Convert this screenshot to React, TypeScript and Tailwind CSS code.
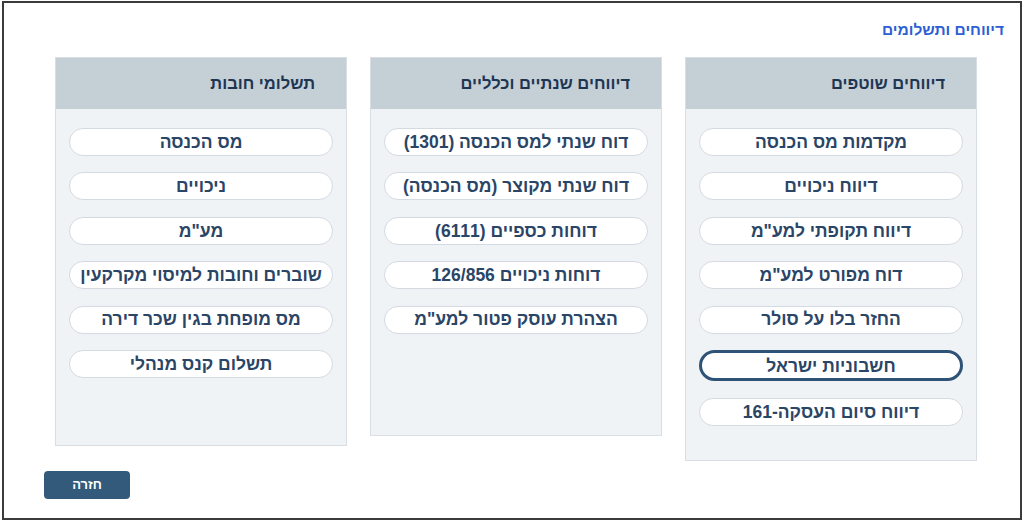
import React from "react";

type Column = {
  title: string;
  items: string[];
  height: string;
  selected?: number;
};

const columns: Column[] = [
  {
    title: "דיווחים שוטפים",
    height: "h-[404px]",
    selected: 5,
    items: [
      "מקדמות מס הכנסה",
      "דיווח ניכויים",
      "דיווח תקופתי למע\"מ",
      "דוח מפורט למע\"מ",
      "החזר בלו על סולר",
      "חשבוניות ישראל",
      "דיווח סיום העסקה-161",
    ],
  },
  {
    title: "דיווחים שנתיים וכלליים",
    height: "h-[379px]",
    items: [
      "דוח שנתי למס הכנסה (1301)",
      "דוח שנתי מקוצר (מס הכנסה)",
      "דוחות כספיים (6111)",
      "דוחות ניכויים 126/856",
      "הצהרת עוסק פטור למע\"מ",
    ],
  },
  {
    title: "תשלומי חובות",
    height: "h-[389px]",
    items: [
      "מס הכנסה",
      "ניכויים",
      "מע\"מ",
      "שוברים וחובות למיסוי מקרקעין",
      "מס מופחת בגין שכר דירה",
      "תשלום קנס מנהלי",
    ],
  },
];

export default function App() {
  return (
    <div className="w-[1024px] h-[524px] bg-white font-['Liberation_Sans','DejaVu_Sans',sans-serif]">
      <div className="ml-[2px] mt-[1px] w-[1020px] h-[519px] border-2 border-[#3b3b3b] flex flex-col" dir="rtl">
        {/* title */}
        <div className="pr-[16px] pt-[17px] h-[54px]">
          <h1 className="text-[15.5px] font-bold text-[#2d5fd3] leading-[20px]">דיווחים ותשלומים</h1>
        </div>

        {/* columns */}
        <div className="flex items-start gap-[23px] pr-[43px]">
          {columns.map((col) => (
            <div
              key={col.title}
              className={`w-[292px] ${col.height} bg-[#f0f3f5] border border-[#d9dee4] flex flex-col`}
            >
              <div className="h-[51px] shrink-0 bg-[#c5cfd6] flex items-center pr-[31px]">
                <span className="text-[16.5px] font-bold text-[#1e3552]">{col.title}</span>
              </div>
              <ul className="flex flex-col px-[13px] pt-[19px] gap-[16.4px]">
                {col.items.map((item, i) =>
                  i === col.selected ? (
                    <li
                      key={item}
                      className="h-[31.5px] rounded-full bg-white border-[3px] border-[#2f5377] flex items-center justify-center text-[17.5px] font-bold text-[#2a4566]"
                    >
                      {item}
                    </li>
                  ) : (
                    <li
                      key={item}
                      className="h-[28px] rounded-full bg-white border border-[#d4dae2] flex items-center justify-center text-[17.5px] font-bold text-[#2a4566]"
                    >
                      {item}
                    </li>
                  )
                )}
              </ul>
            </div>
          ))}
        </div>

        {/* back */}
        <div className="flex-1 flex items-end justify-start pl-[40px] pb-[19px]" dir="ltr">
          <button className="w-[86px] h-[28px] rounded-[4px] bg-[#335a7a] text-white text-[13px] font-bold">
            חזרה
          </button>
        </div>
      </div>
    </div>
  );
}
